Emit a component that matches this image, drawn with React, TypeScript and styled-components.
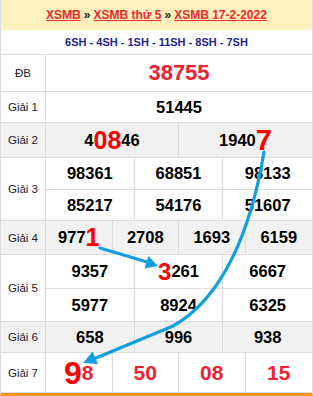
import styled, { createGlobalStyle } from "styled-components";

const GlobalStyle = createGlobalStyle`
  body {
    margin: 0;
    background: #fff;
    font-family: "Liberation Sans", Arial, sans-serif;
  }
`;

type Kind = "db" | "plain" | "g7";

type Prize = {
  label: string;
  h: number;
  cols: number;
  shade?: boolean;
  kind?: Kind;
  nums: string[];
  hi?: number[];
};

const prizes: Prize[] = [
  { label: "ĐB", h: 37, cols: 1, kind: "db", nums: ["38755"] },
  { label: "Giải 1", h: 31, cols: 1, nums: ["51445"] },
  { label: "Giải 2", h: 35, cols: 2, shade: true, nums: ["4[08]46", "1940[7]"], hi: [25, 29] },
  { label: "Giải 3", h: 63, cols: 3, nums: ["98361", "68851", "98133", "85217", "54176", "51607"] },
  { label: "Giải 4", h: 34, cols: 4, shade: true, nums: ["977[1]", "2708", "1693", "6159"], hi: [25] },
  { label: "Giải 5", h: 67, cols: 3, nums: ["9357", "[3]261", "6667", "5977", "8924", "6325"], hi: [0, 24] },
  { label: "Giải 6", h: 31, cols: 3, shade: true, nums: ["658", "996", "938"] },
  { label: "Giải 7", h: 40, cols: 4, kind: "g7", nums: ["[9]8", "50", "08", "15"], hi: [32] },
];

// "4[08]46" -> 4 + big red 08 + 46
function renderNum(s: string, size = 24) {
  const m = s.match(/^(.*)\[(.*)\](.*)$/);
  if (!m) return s;
  return (
    <>
      {m[1]}
      <Hot $size={size}>{m[2]}</Hot>
      {m[3]}
    </>
  );
}

export default function App() {
  return (
    <>
      <GlobalStyle />
      <Board>
        <Header>
          <Crumb href="#">XSMB</Crumb>
          <Sep>»</Sep>
          <Crumb href="#">XSMB thứ 5</Crumb>
          <Sep>»</Sep>
          <Crumb href="#">XSMB 17-2-2022</Crumb>
        </Header>
        <Codes>6SH - 4SH - 1SH - 11SH - 8SH - 7SH</Codes>
        {prizes.map((p) => (
          <Row key={p.label} $h={p.h} $shade={!!p.shade}>
            <Label>{p.label}</Label>
            <Values $cols={p.cols}>
              {p.nums.map((n, i) => (
                <Num key={i} $cols={p.cols} $kind={p.kind || "plain"}>
                  {renderNum(n, p.hi?.[i])}
                </Num>
              ))}
            </Values>
          </Row>
        ))}
        <Arrows viewBox="0 0 313 396" width="313" height="396">
          <path
            d="M263 152 C250 230 222 298 172 326 L95 358"
            fill="none"
            stroke="#139ee0"
            strokeWidth="3.2"
            strokeLinecap="round"
          />
          <polygon points="82,363 91.5,351.5 97,364" fill="#139ee0" />
          <path d="M99 248 L146 262" fill="none" stroke="#139ee0" strokeWidth="3.2" strokeLinecap="round" />
          <polygon points="157,266 143.5,268.5 147.5,256" fill="#139ee0" />
        </Arrows>
      </Board>
    </>
  );
}

const Board = styled.div`
  position: relative;
  width: 313px;
  box-sizing: border-box;
  border-left: 1px solid #dcdcdc;
  border-right: 1px solid #dcdcdc;
  border-bottom: 3px solid #f7941d;
`;

const Header = styled.div`
  height: 30px;
  background: #fcf0bd;
  display: flex;
  align-items: center;
  justify-content: center;
  font-size: 12px;
  font-weight: bold;
`;

const Crumb = styled.a`
  color: #ee2a2a;
  text-decoration: underline;
`;

const Sep = styled.span`
  color: #222;
  margin: 0 3px;
`;

const Codes = styled.div`
  height: 25px;
  box-sizing: border-box;
  border-bottom: 1px solid #dcdcdc;
  display: flex;
  align-items: center;
  justify-content: center;
  color: #1f1f8f;
  font-size: 11px;
  font-weight: bold;
`;

const Row = styled.div<{ $h: number; $shade: boolean }>`
  display: grid;
  grid-template-columns: 45px 1fr;
  height: ${(p) => p.$h}px;
  box-sizing: border-box;
  border-bottom: 1px solid #dcdcdc;
  background: ${(p) => (p.$shade ? "#f1f1f1" : "#fff")};
`;

const Label = styled.div`
  display: flex;
  align-items: center;
  justify-content: center;
  border-right: 1px solid #dcdcdc;
  font-size: 11.5px;
  color: #1a1a2a;
`;

const Values = styled.div<{ $cols: number }>`
  display: grid;
  grid-template-columns: repeat(${(p) => p.$cols}, 1fr);
  grid-auto-rows: 1fr;
`;

const numSize = { db: 22, plain: 16.5, g7: 21 };
const numColor = { db: "#ee2233", plain: "#000", g7: "#ee2233" };

const Num = styled.div<{ $cols: number; $kind: Kind }>`
  display: flex;
  align-items: center;
  justify-content: center;
  line-height: 1;
  font-weight: bold;
  font-size: ${(p) => numSize[p.$kind]}px;
  color: ${(p) => numColor[p.$kind]};
  border-right: 1px solid #dcdcdc;
  &:nth-child(${(p) => p.$cols}n) {
    border-right: none;
  }
  &:nth-child(n + ${(p) => p.$cols + 1}) {
    border-top: 1px solid #dcdcdc;
  }
`;

const Hot = styled.span<{ $size: number }>`
  font-size: ${(p) => p.$size}px;
  color: #ff0000;
`;

const Arrows = styled.svg`
  position: absolute;
  top: 0;
  left: 0;
  pointer-events: none;
`;
